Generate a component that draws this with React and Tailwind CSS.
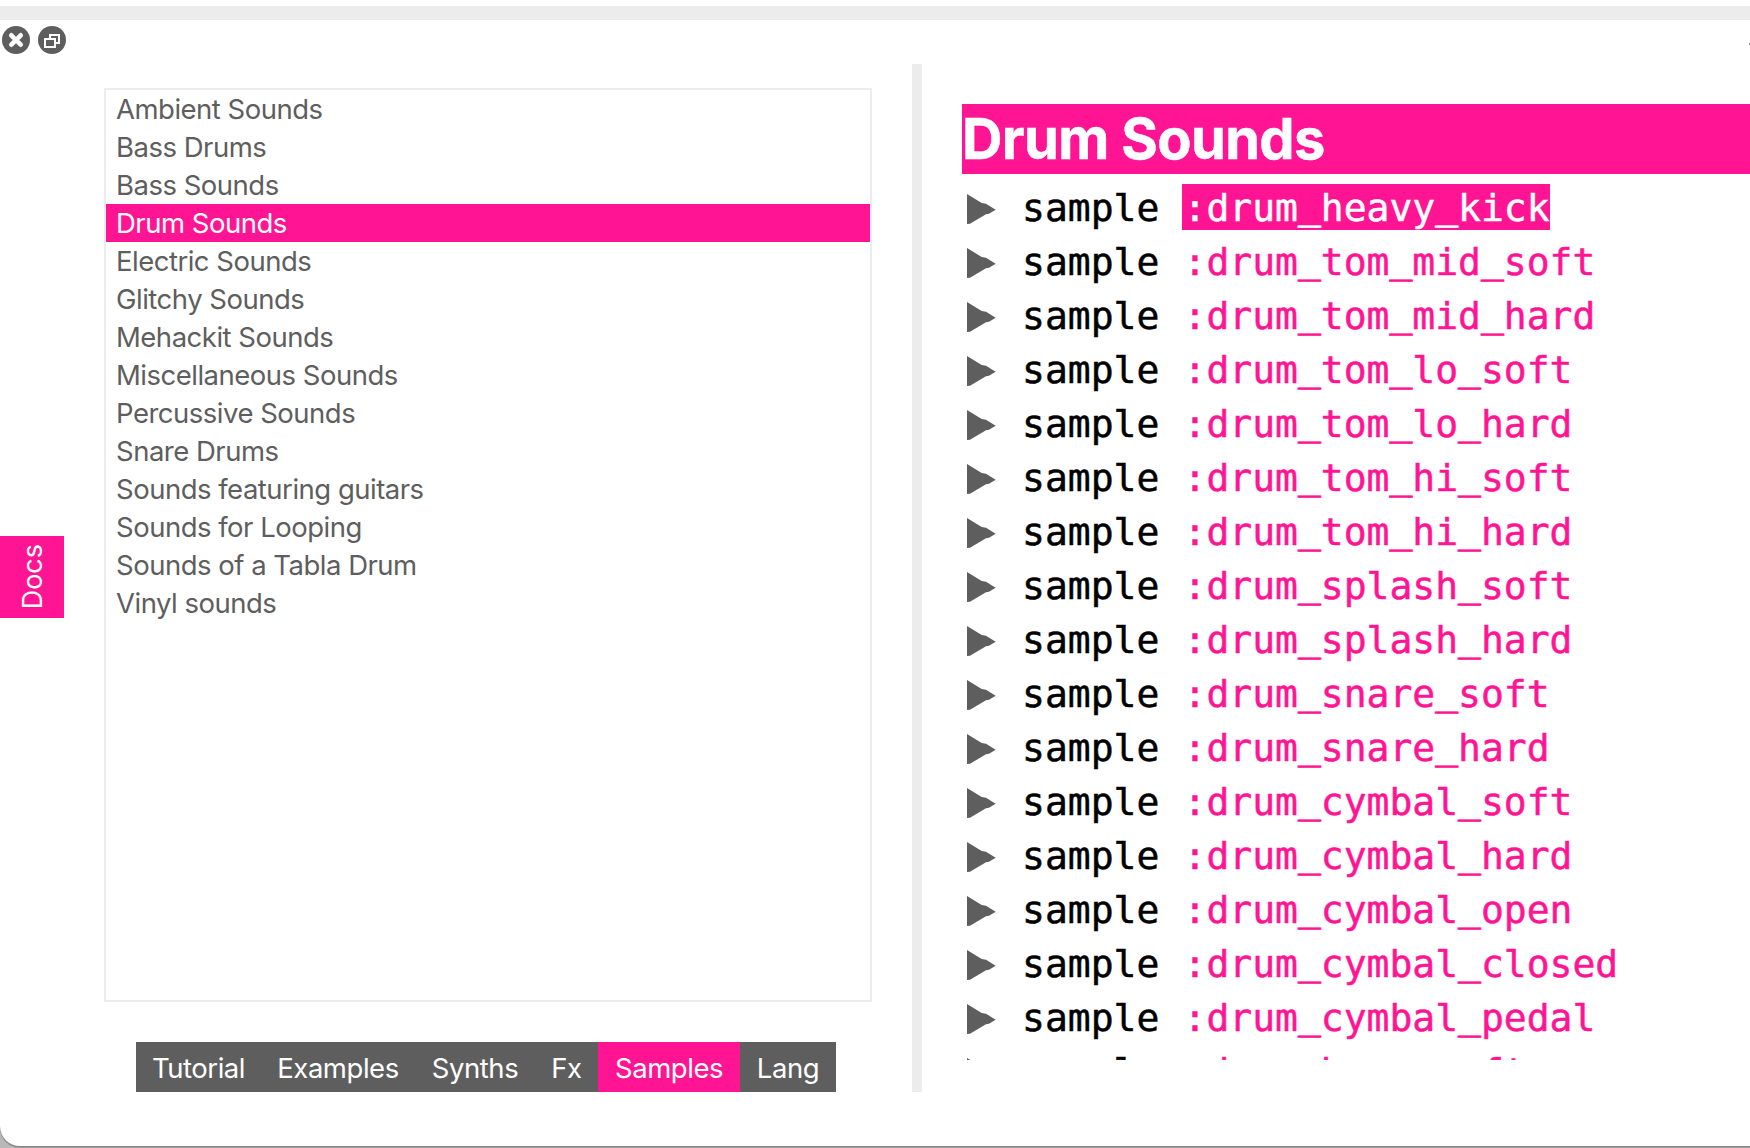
const CATEGORIES = [
  'Ambient Sounds',
  'Bass Drums',
  'Bass Sounds',
  'Drum Sounds',
  'Electric Sounds',
  'Glitchy Sounds',
  'Mehackit Sounds',
  'Miscellaneous Sounds',
  'Percussive Sounds',
  'Snare Drums',
  'Sounds featuring guitars',
  'Sounds for Looping',
  'Sounds of a Tabla Drum',
  'Vinyl sounds'
]

const TABS = [
  { label: 'Tutorial', width: 'w-[125px]' },
  { label: 'Examples', width: 'w-[154px]' },
  { label: 'Synths', width: 'w-[120px]' },
  { label: 'Fx', width: 'w-[63px]' },
  { label: 'Samples', width: 'w-[142px]' },
  { label: 'Lang', width: 'w-[96px]' }
]

const SAMPLES = [
  'drum_heavy_kick',
  'drum_tom_mid_soft',
  'drum_tom_mid_hard',
  'drum_tom_lo_soft',
  'drum_tom_lo_hard',
  'drum_tom_hi_soft',
  'drum_tom_hi_hard',
  'drum_splash_soft',
  'drum_splash_hard',
  'drum_snare_soft',
  'drum_snare_hard',
  'drum_cymbal_soft',
  'drum_cymbal_hard',
  'drum_cymbal_open',
  'drum_cymbal_closed',
  'drum_cymbal_pedal',
  'drum_bass_soft'
]

function TitleBar() {
  return (
    <div className="flex h-11 gap-2 pl-0.5 pt-1.5">
      <svg className="size-7" viewBox="0 0 28 28">
        <circle cx="14" cy="14" r="14" fill="#5e5e5e" />
        <path d="M9.3 9.3l9.4 9.4M18.7 9.3l-9.4 9.4" stroke="#fff" strokeWidth="4.6" strokeLinecap="round" />
      </svg>
      <svg className="size-7" viewBox="0 0 28 28" fill="none">
        <circle cx="14" cy="14" r="14" fill="#5e5e5e" />
        <path d="M12 12V9h9v8h-3" stroke="#fff" strokeWidth="2" />
        <path d="M7 13h10v8H7z" stroke="#fff" strokeWidth="2" />
      </svg>
      {/* edge of the panel title, mostly scrolled out of the window */}
      <div className="ml-auto mt-[17px] h-0.5 w-px bg-[#8a8a8a]" />
    </div>
  )
}

function CategoryList({ selected }) {
  return (
    <ul className="h-[914px] w-[768px] border-2 border-[#ededed]">
      {CATEGORIES.map(name => (
        <li
          key={name}
          className={`h-[38px] whitespace-nowrap pl-2.5 text-[27.5px] leading-[38px] tracking-[-0.5px] ${
            name === selected ? 'bg-[#ff1493] text-white' : 'text-[#5e5e5e]'
          }`}
        >
          {name}
        </li>
      ))}
    </ul>
  )
}

function TabBar({ active }) {
  return (
    <div className="ml-8 mt-10 flex h-[50px] w-[700px]">
      {TABS.map(({ label, width }) => (
        <button
          key={label}
          className={`${width} h-[50px] pt-0.5 text-center text-[27.5px] leading-[48px] tracking-[-0.45px] text-white ${
            label === active ? 'bg-[#ff1493]' : 'bg-[#5e5e5e]'
          }`}
        >
          {label}
        </button>
      ))}
    </div>
  )
}

// Underscores sit close under the baseline so they stay inside the highlight
function Symbol({ name }) {
  return name.split(/(_)/).map((part, i) =>
    part === '_' ? (
      <span key={i} className="relative -top-[3px] [-webkit-text-stroke:0.9px]">_</span>
    ) : (
      part
    )
  )
}

function SampleRow({ name, selected }) {
  return (
    <div className="flex h-[54px] shrink-0 items-start font-['DejaVu_Sans_Mono',monospace] text-[38px] leading-[48px] [-webkit-text-stroke:0.5px]">
      <svg className="ml-[5px] mt-[10px] h-[30px] w-[29px]" viewBox="0 0 29 30">
        <path d="M0 0l14.7 9 4.3.7 9.7 6-6.7 4-3 .6L3 29.8 0 30z" fill="#5e5e5e" />
      </svg>
      <span className="ml-[26px] w-40 whitespace-pre text-black">{'sample '}</span>
      <span
        className={`h-[46px] min-w-[368px] whitespace-nowrap pl-[1.5px] ${
          selected ? 'bg-[#ff1493] text-white' : 'text-[#ff1493]'
        }`}
      >
        <Symbol name={`:${name}`} />
      </span>
    </div>
  )
}

export default function App() {
  return (
    <div className="h-[1148px] w-[1750px] overflow-hidden bg-[#b8b8b8] font-['Inter',sans-serif]">
      <div className="flex h-[1146px] flex-col overflow-hidden rounded-bl-[20px] bg-white pt-1.5 shadow-[0_1px_0_#868686,0_2px_0_#9c9c9c]">
        <div className="h-3.5 shrink-0 bg-[#ececec]" />
        <TitleBar />

        <div className="flex h-[1028px]">
          {/* Docs side tab */}
          <div className="mt-[472px] flex h-[82px] w-16 items-center justify-center bg-[#ff1493]">
            <span className="rotate-180 text-[27px] leading-none text-white [writing-mode:vertical-rl]">Docs</span>
          </div>

          <div className="ml-10 mt-6">
            <CategoryList selected="Drum Sounds" />
            <TabBar active="Samples" />
          </div>

          <div className="ml-10 w-2.5 bg-[#ececec]" />

          <div className="ml-10 mt-10 flex h-[956px] flex-1 flex-col overflow-hidden">
            <h1 className="mb-2.5 h-[70px] shrink-0 bg-[#ff1493] text-[56px] font-bold leading-[71px] tracking-[-0.65px] text-white [-webkit-text-stroke:0.5px]">
              Drum Sounds
            </h1>
            {SAMPLES.map(name => (
              <SampleRow key={name} name={name} selected={name === 'drum_heavy_kick'} />
            ))}
          </div>
        </div>
      </div>
    </div>
  )
}
